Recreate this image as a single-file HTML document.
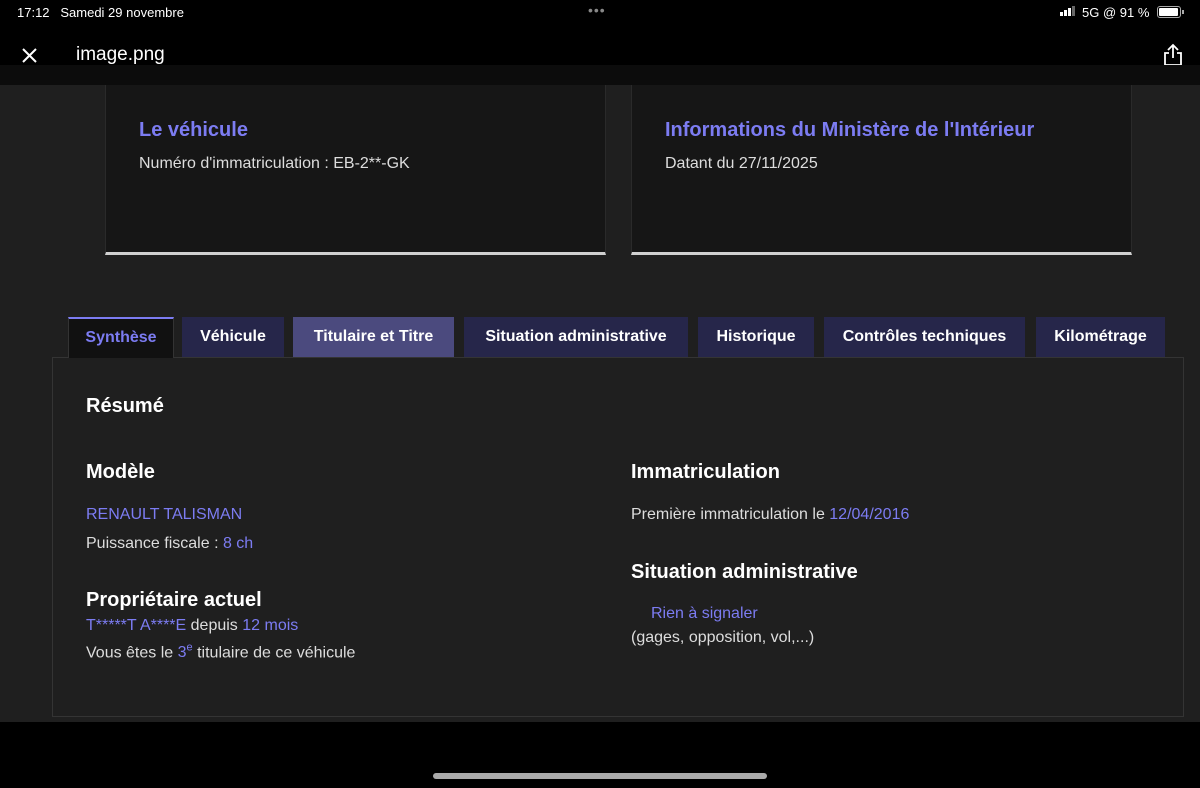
<!DOCTYPE html>
<html><head><meta charset="utf-8"><style>
*{margin:0;padding:0;box-sizing:border-box}
body{width:1200px;height:788px;background:#1f1f1f;font-family:"Liberation Sans",sans-serif;position:relative;overflow:hidden;color:#e6e6e6}
.abs{position:absolute}
.top{left:0;top:0;width:1200px;height:65px;background:#000}
.band{left:0;top:65px;width:1200px;height:20px;background:#0c0c0c}
.card{top:85px;height:170px;width:501px;background:#161616;border-left:1px solid #2a2a2a;border-right:1px solid #2a2a2a;border-bottom:3px solid #d0d0d0}
.card h2{position:absolute;left:33px;top:34px;font-size:20px;color:#7c7cf2;font-weight:bold}
.card p{position:absolute;left:33px;top:70px;font-size:16px;color:#ddd}
.tab{top:317px;height:40px;font-size:16px;font-weight:bold;color:#fff;text-align:center;line-height:40px}
.box{left:52px;top:357px;width:1132px;height:360px;border:1px solid #343434;background:#1f1f1f}
h3{position:absolute;font-size:20px;font-weight:bold;color:#fff}
.t{position:absolute;font-size:16px;color:#ddd}
.b,.t.b{color:#7c7cf2}
.bot{left:0;top:722px;width:1200px;height:66px;background:#000}
</style></head><body>
<div class="abs top"></div>
<div class="abs" style="left:17px;top:5px;font-size:13px;color:#fff">17:12&nbsp;&nbsp;&nbsp;Samedi 29 novembre</div>
<div class="abs" style="left:588px;top:2px;font-size:14px;color:#888;letter-spacing:1px">•••</div>
<div class="abs" style="left:1060px;top:6px;width:16px;height:10px">
<div class="abs" style="left:0;top:6px;width:3px;height:4px;background:#fff"></div>
<div class="abs" style="left:4px;top:4px;width:3px;height:6px;background:#fff"></div>
<div class="abs" style="left:8px;top:2px;width:3px;height:8px;background:#fff"></div>
<div class="abs" style="left:12px;top:0;width:3px;height:10px;background:#666"></div></div>
<div class="abs" style="left:1082px;top:5px;font-size:13px;color:#fff">5G @ 91 %</div>
<div class="abs" style="left:1157px;top:6px;width:24px;height:12px;border:1px solid #aaa;border-radius:3px;padding:1px"><div style="width:19px;height:8px;background:#fff;border-radius:1px"></div></div>
<div class="abs" style="left:1182px;top:10px;width:2px;height:4px;background:#aaa"></div>
<svg class="abs" style="left:21px;top:47px" width="17" height="17"><path d="M2 2L15 15M15 2L2 15" stroke="#fff" stroke-width="2"/></svg>
<div class="abs" style="left:76px;top:44px;font-size:19px;color:#fff">image.png</div>
<svg class="abs" style="left:1162px;top:43px" width="22" height="24"><path d="M11 2V15M6 7L11 2L16 7M7 10H3V22H19V10H15" stroke="#fff" stroke-width="1.8" fill="none"/></svg>
<div class="abs band"></div>
<div class="abs card" style="left:105px"><h2>Le véhicule</h2><p>Numéro d'immatriculation : EB-2**-GK</p></div>
<div class="abs card" style="left:631px"><h2>Informations du Ministère de l'Intérieur</h2><p>Datant du 27/11/2025</p></div>
<div class="abs box"></div>
<div class="abs tab" style="left:68px;width:106px;background:#111;border-top:2px solid #7c7cf2;border-left:1px solid #333;border-right:1px solid #333;height:41px;color:#7c7cf2;line-height:38px">Synthèse</div>
<div class="abs tab" style="left:182px;width:102px;background:#26264a">Véhicule</div>
<div class="abs tab" style="left:293px;width:161px;background:#4b4a7e">Titulaire et Titre</div>
<div class="abs tab" style="left:464px;width:224px;background:#26264a">Situation administrative</div>
<div class="abs tab" style="left:698px;width:116px;background:#26264a">Historique</div>
<div class="abs tab" style="left:824px;width:201px;background:#26264a">Contrôles techniques</div>
<div class="abs tab" style="left:1036px;width:129px;background:#26264a">Kilométrage</div>
<h3 style="left:86px;top:395px">Résumé</h3>
<h3 style="left:86px;top:461px">Modèle</h3>
<div class="t b" style="left:86px;top:506px">RENAULT TALISMAN</div>
<div class="t" style="left:86px;top:535px">Puissance fiscale : <span class="b">8 ch</span></div>
<h3 style="left:86px;top:589px">Propriétaire actuel</h3>
<div class="t" style="left:86px;top:617px"><span class="b">T*****T A****E</span> depuis <span class="b">12 mois</span></div>
<div class="t" style="left:86px;top:642px">Vous êtes le <span class="b">3<sup style="font-size:11px">e</sup></span> titulaire de ce véhicule</div>
<h3 style="left:631px;top:461px">Immatriculation</h3>
<div class="t" style="left:631px;top:506px">Première immatriculation le <span class="b">12/04/2016</span></div>
<h3 style="left:631px;top:561px">Situation administrative</h3>
<div class="t b" style="left:651px;top:605px">Rien à signaler</div>
<div class="t" style="left:631px;top:629px">(gages, opposition, vol,...)</div>
<div class="abs bot"></div>
<div class="abs" style="left:433px;top:773px;width:334px;height:6px;border-radius:3px;background:#aaa"></div>
</body></html>
